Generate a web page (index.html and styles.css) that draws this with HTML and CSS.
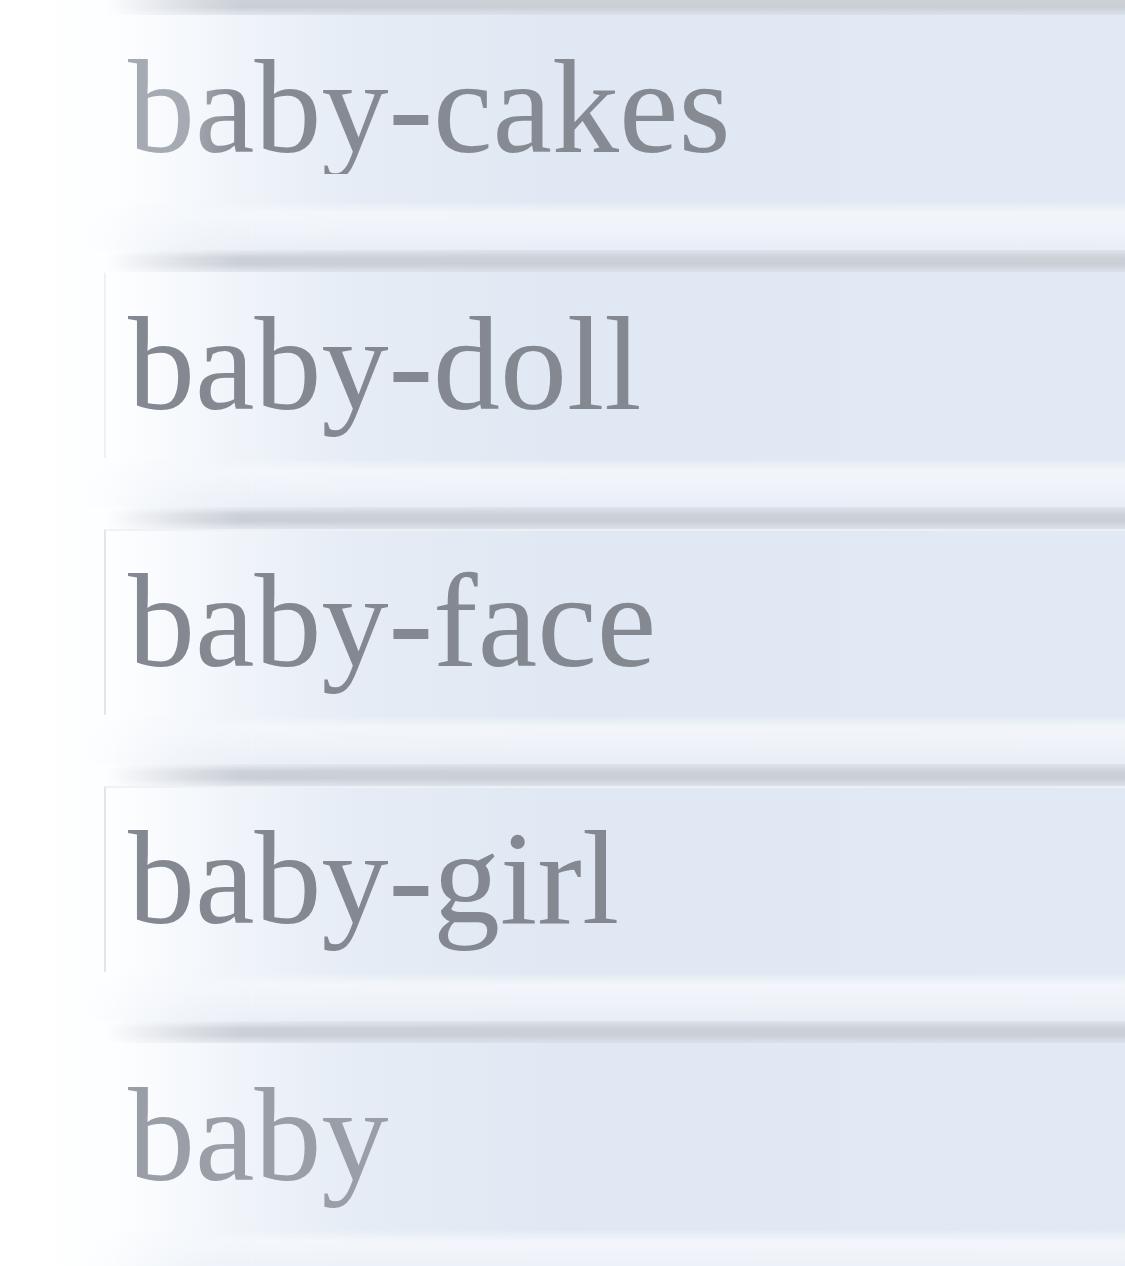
FILE: index.html
```html
<!DOCTYPE html>
<html lang="en">
<head>
<meta charset="utf-8">
<title>Tags</title>
<link rel="stylesheet" href="styles.css">
</head>
<body>
<ul class="list">
  <li class="row">
    <div class="row-shade"></div>
    <div class="row-body"><span class="label label--fade">baby-cakes</span></div>
    <div class="row-gloss"></div>
  </li>
  <li class="row row--faintbox">
    <div class="row-shade"></div>
    <div class="row-body"><span class="label">baby-doll</span></div>
    <div class="row-gloss"></div>
  </li>
  <li class="row row--boxed">
    <div class="row-shade"></div>
    <div class="row-body"><span class="label">baby-face</span></div>
    <div class="row-gloss"></div>
  </li>
  <li class="row row--boxed">
    <div class="row-shade"></div>
    <div class="row-body"><span class="label">baby-girl</span></div>
    <div class="row-gloss"></div>
  </li>
  <li class="row">
    <div class="row-shade"></div>
    <div class="row-body"><span class="label label--light">baby</span></div>
    <div class="row-gloss"></div>
  </li>
</ul>
</body>
</html>
```

FILE: styles.css
```css
html, body {
  margin: 0;
  padding: 0;
  background: #ffffff;
  overflow: hidden;
}

.list {
  list-style: none;
  margin: -7px 0 0 0;
  padding: 0;
}

.row {
  height: 257px;
  display: flex;
  flex-direction: column;
  background: linear-gradient(to right, #ffffff 0px, #fdfeff 115px, #f0f4fa 240px, #e5ecf5 360px, #e0e8f3 560px, #e1e9f4 100%);
}

.row-shade {
  height: 22px;
  flex: none;
  background: linear-gradient(to bottom, rgba(216,220,226,0.35) 0%, #ccd0d7 35%, #cacfd6 65%, rgba(216,221,228,0.6) 100%);
  -webkit-mask-image: linear-gradient(to right, transparent 105px, #000 240px);
  mask-image: linear-gradient(to right, transparent 105px, #000 240px);
}

.row-body {
  flex: 1;
  margin-left: 104px;
  padding: 23px 0 0 22px;
  border-left: 2px solid transparent;
  border-top: 2px solid transparent;
  overflow: hidden;
}

.row--faintbox .row-body {
  border-left-color: rgba(226,231,238,0.6);
}

.row--boxed .row-body {
  border-left-color: rgba(214,220,228,0.7);
  border-top-color: rgba(238,241,246,0.9);
}

.row-gloss {
  height: 49px;
  flex: none;
  background: linear-gradient(to bottom, rgba(240,244,250,0) 0%, rgba(245,248,252,0.85) 25%, rgba(240,244,250,0.9) 60%, rgba(233,238,246,0.85) 100%);
  -webkit-mask-image: linear-gradient(to right, transparent 80px, #000 260px);
  mask-image: linear-gradient(to right, transparent 80px, #000 260px);
}

.label {
  display: block;
  font-family: "Liberation Serif", "Times New Roman", serif;
  font-size: 134px;
  line-height: 134px;
  color: #848891;
  white-space: nowrap;
  filter: blur(0.7px);
}

.label--fade {
  background: linear-gradient(to right, #a6aab2 0px, #a6aab2 60px, #858a93 110px);
  -webkit-background-clip: text;
  background-clip: text;
  color: transparent;
}

.label--light {
  color: #9a9ea6;
}
```
